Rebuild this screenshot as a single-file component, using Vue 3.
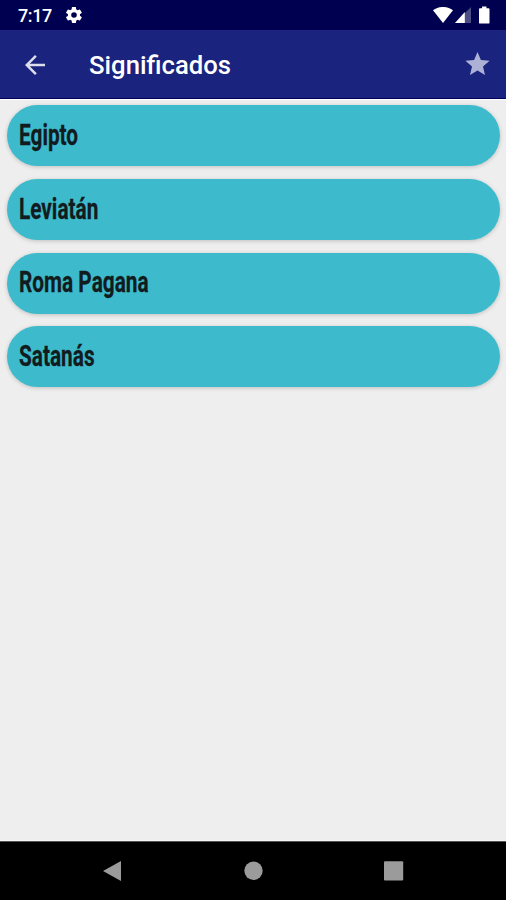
<template>
  <div class="screen">
    <div class="status-bar">
      <span class="clock">7:17</span>
      <svg class="gear" viewBox="2 2 20 20">
        <path d="M19.4 13c0-.3.1-.6.1-1s0-.7-.1-1l2.1-1.600c.2-.2.3-.4.1-.7l-2-3.400c-.1-.2-.4-.3-.6-.2l-2.500 1c-.5-.4-1.100-.7-1.700-1l-.4-2.600c0-.3-.2-.5-.5-.5h-4c-.3 0-.5.2-.5.4L9 5.100c-.6.200-1.200.600-1.700 1l-2.500-1c-.2-.1-.5 0-.6.200l-2 3.400c-.1.200-.1.500.1.700L4.500 11c0 .3-.1.600-.1 1s0 .7.1 1l-2.200 1.600c-.2.200-.2.400-.1.700l2 3.400c.1.200.4.300.6.200l2.500-1c.5.400 1.100.7 1.700 1l.4 2.600c0 .3.200.5.500.5h4c.3 0 .5-.2.500-.4l.4-2.700c.6-.2 1.200-.6 1.700-1l2.500 1c.2.100.5 0 .6-.2l2-3.400c.1-.2.100-.5-.1-.7L19.400 13zM12 15.500a3.500 3.500 0 1 1 0-7 3.500 3.500 0 0 1 0 7z" />
      </svg>
      <div class="system">
        <svg class="wifi" viewBox="0 0 20 16">
          <path d="M0 3.200C5.500-1.100 14.500-1.100 20 3.200L10 16z" />
        </svg>
        <svg class="signal" viewBox="0 0 16 16">
          <path d="M16 0v16H0z" opacity=".3" />
          <path d="M9.800 5V16H0z" />
        </svg>
        <svg class="battery" viewBox="0 0 11 18">
          <path d="M3.200 0h4.600v2H10q1 0 1 1v14q0 1-1 1H1q-1 0-1-1V3q0-1 1-1h2.200z" />
        </svg>
      </div>
    </div>

    <header class="toolbar">
      <svg class="back" viewBox="4 4 16 16">
        <path d="M20 11H7.830l5.590-5.590L12 4l-8 8 8 8 1.410-1.410L7.830 13H20z" />
      </svg>
      <h1>Significados</h1>
      <svg class="star" viewBox="2 2 20 19">
        <path d="M12 17.270L18.180 21l-1.640-7.030L22 9.240l-7.190-.61L12 2 9.190 8.630 2 9.240l5.460 4.730L5.820 21z" />
      </svg>
    </header>

    <main class="list">
      <div v-for="item in items" :key="item" class="card">
        <span>{{ item }}</span>
      </div>
    </main>

    <nav class="nav-bar">
      <svg viewBox="0 0 20 22"><path d="M19 1v20L1 11z" /></svg>
      <svg viewBox="0 0 20 22"><circle cx="10.500" cy="10.800" r="9.200" /></svg>
      <svg viewBox="0 0 20 22"><rect x="0" y="1.200" width="19.200" height="19.200" rx="1" /></svg>
    </nav>
  </div>
</template>

<script setup>
const items = ['Egipto', 'Leviatán', 'Roma Pagana', 'Satanás']
</script>

<style>
body { margin: 0; }
</style>

<style scoped>
.screen { display: flex; flex-direction: column; width: 506px; height: 900px; overflow: hidden; background: #eee; font-family: Roboto, "Liberation Sans", sans-serif; }
svg { display: block; flex: none; fill: #fff; }

.status-bar { display: flex; align-items: center; box-sizing: border-box; height: 30px; padding: 0 16px 0 18px; background: #000051; color: #fff; }
.clock { width: 34px; padding-top: 2px; font-size: 18px; font-weight: 500; line-height: 28px; letter-spacing: -.4px; }
.gear { width: 16px; height: 16px; margin-left: 14px; }
.system { display: flex; align-items: center; margin-left: auto; }
.wifi { width: 20px; height: 16px; margin-bottom: 1px; }
.signal { width: 16px; height: 16px; margin-left: 2px; }
.battery { width: 10.500px; height: 18px; margin: 0 .5px 1px 8px; }

.toolbar { display: flex; align-items: center; box-sizing: border-box; height: 69px; padding: 0 16px 0 25px; background: #1a237e; border-bottom: 1px solid #00005c; }
.back { width: 20px; height: 20px; margin-top: 1px; opacity: .85; }
.toolbar h1 { margin: 2px 0 0 44px; color: #fff; font-size: 25.700px; font-weight: 500; line-height: 30px; }
.star { width: 25px; height: 23px; margin: 0 0 1px auto; fill: #adb1d6; }

.list { display: flex; flex: 1; flex-direction: column; gap: 12.700px; padding: 5.500px 6px 0 6.500px; border-top: 1px solid #fff; border-bottom: 2px solid #f7f7f7; margin-bottom: -1px; }
.card { display: flex; align-items: center; box-sizing: border-box; height: 61px; margin-top: -.1px; padding-left: 12.500px; border-radius: 31px; background: #3dbbcc; box-shadow: 0 1px 4px rgba(0, 0, 0, .2); }
.card span { color: #121c1f; font-size: 29px; font-weight: 700; line-height: 40px; white-space: nowrap; transform: translateY(-1.300px) scaleX(.717); transform-origin: left; -webkit-text-stroke: .3px #121c1f; }

.nav-bar { display: flex; align-items: center; justify-content: space-between; box-sizing: border-box; height: 59px; padding: 0 102px 0 102px; border-top: 1px solid #555; background: #000; }
.nav-bar svg { width: 20px; height: 22px; fill: #9b9b9b; }
</style>
